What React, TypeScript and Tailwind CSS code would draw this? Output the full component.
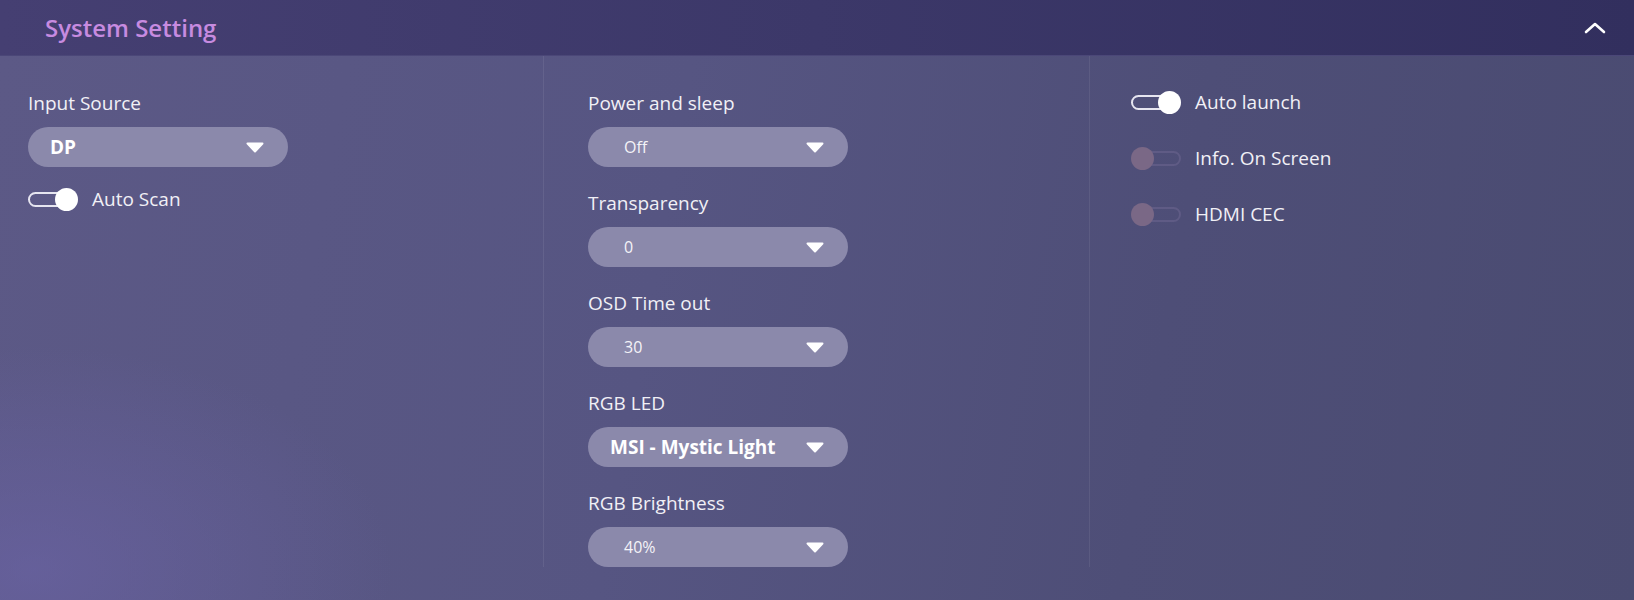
import React from 'react';

type Option = { label: string; value: string; bold?: boolean };

const Caret: React.FC = () => (
  <svg width="18" height="11" viewBox="0 0 18 11" className="shrink-0">
    <path d="M1.5 1.5 L16.5 1.5 L9 9.5 Z" fill="#ffffff" stroke="#ffffff" strokeWidth="2" strokeLinejoin="round" />
  </svg>
);

const Select: React.FC<Option> = ({ label, value, bold }) => (
  <div className="flex flex-col">
    <div className="h-6 mb-3 text-[19px] leading-6 text-[#f1f0f6]">{label}</div>
    <div className="w-[260px] h-10 rounded-full bg-[#8b89ab] flex items-center justify-between pr-[24px]">
      <span
        className={
          bold
            ? 'pl-[22px] text-[19px] font-bold text-white'
            : 'pl-[36px] text-[16px] text-[#f4f3f8]'
        }
      >
        {value}
      </span>
      <Caret />
    </div>
  </div>
);

const Toggle: React.FC<{ label: string; on?: boolean }> = ({ label, on }) => (
  <div className="flex items-center h-6">
    <div className="relative w-[50px] h-[23px] flex items-center">
      {on ? (
        <>
          <div className="w-[42px] h-[15px] rounded-full border-2 border-[#e6e5f0]" />
          <div className="absolute right-0 top-0 w-[23px] h-[23px] rounded-full bg-white" />
        </>
      ) : (
        <>
          <div className="ml-[8px] w-[42px] h-[15px] rounded-full border-2 border-[#5f5b85]" />
          <div className="absolute left-0 top-0 w-[23px] h-[23px] rounded-full bg-[#7a6886]" />
        </>
      )}
    </div>
    <span className="ml-[14px] text-[19px] text-[#f1f0f6]">{label}</span>
  </div>
);

export default function App() {
  return (
    <div
      className="w-[1634px] h-[600px] overflow-hidden flex flex-col text-white"
      style={{ fontFamily: '"Open Sans", "Noto Sans", sans-serif' }}
    >
      {/* Header */}
      <div className="h-[56px] shrink-0 flex items-center justify-between pl-[45px] pr-[28px] bg-gradient-to-r from-[#453f72] via-[#3c3869] to-[#322f5e] border-b border-[#4b4778]">
        <span className="text-[24px] font-semibold text-[#c78be0]">System Setting</span>
        <svg width="22" height="13" viewBox="0 0 22 13">
          <path d="M2 11 L11 3 L20 11" fill="none" stroke="#ffffff" strokeWidth="2.6" strokeLinecap="round" strokeLinejoin="round" />
        </svg>
      </div>

      {/* Body */}
      <div className="flex-1 grid grid-cols-[543px_546px_1fr] pb-[47px] bg-[radial-gradient(ellipse_22%_40%_at_2%_92%,rgba(108,100,168,0.6)_0%,rgba(108,100,168,0)_100%),linear-gradient(100deg,#5c5986_0%,#565582_40%,#4e4e77_70%,#4a4b71_100%)]">
        {/* Column 1 */}
        <div className="pt-[35px] pl-[28px] flex flex-col">
          <Select label="Input Source" value="DP" bold />
          <div className="mt-[20px]">
            <Toggle label="Auto Scan" on />
          </div>
        </div>

        {/* Column 2 */}
        <div className="pt-[35px] pl-[44px] border-l border-white/[0.07] flex flex-col gap-[24px]">
          <Select label="Power and sleep" value="Off" />
          <Select label="Transparency" value="0" />
          <Select label="OSD Time out" value="30" />
          <Select label="RGB LED" value="MSI - Mystic Light" bold />
          <Select label="RGB Brightness" value="40%" />
        </div>

        {/* Column 3 */}
        <div className="pt-[34px] pl-[41px] border-l border-white/[0.07] flex flex-col gap-[32px]">
          <Toggle label="Auto launch" on />
          <Toggle label="Info. On Screen" />
          <Toggle label="HDMI CEC" />
        </div>
      </div>
    </div>
  );
}
